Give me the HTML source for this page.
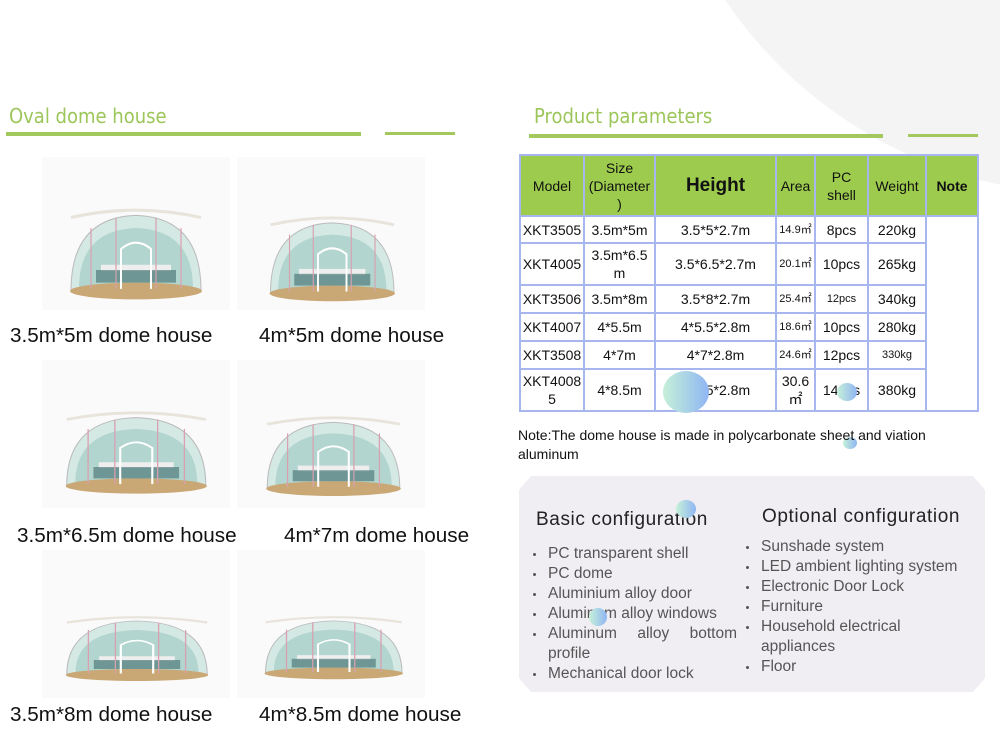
<!DOCTYPE html>
<html><head><meta charset="utf-8"><style>
body{margin:0;width:1000px;height:750px;overflow:hidden;background:#fff;font-family:"Liberation Sans",sans-serif;position:relative}
.a{position:absolute}
.h{color:#9cc65a;font-size:20px;font-family:"DejaVu Sans Condensed","Liberation Sans Narrow","Liberation Sans",sans-serif;font-weight:300}
.bar{position:absolute;height:4px;background:#a3c85e}
.cap{position:absolute;font-size:20.7px;color:#111;white-space:nowrap}
.img{position:absolute;background:#fafafa}
table{position:absolute;left:519px;top:154px;border-collapse:collapse;font-size:14px;color:#111}
td{border:2px solid #a8b6ef;text-align:center;padding:0;line-height:18px}
tr.hd td{background:#9dcb4d}
.cfg{position:absolute;left:519px;top:476px;width:466px;height:216px;background:#f0eef3;clip-path:polygon(12px 0,454px 0,466px 14px,466px 202px,454px 216px,12px 216px,0 202px,0 14px)}
.cfg h3{position:absolute;margin:0;font-weight:normal;font-size:19px;color:#222;letter-spacing:.6px}
.cfg ul{position:absolute;margin:0;padding:0;list-style:none;font-size:15.5px;color:#555;line-height:20px}
.cfg li{position:relative;padding-left:29px}
.cfg li:before{content:"";position:absolute;left:14px;top:9px;width:3px;height:3px;border-radius:50%;background:#555}
.blob{position:absolute;border-radius:50%;background:linear-gradient(90deg,#c6f0d8,#8fb6f3)}
</style></head><body>
<div class="a" style="left:650px;top:-686px;width:880px;height:880px;border-radius:50%;background:#f4f4f4"></div>

<div class="a h" style="left:9px;top:104px">Oval dome house</div>
<div class="bar" style="left:6px;top:132px;width:355px"></div>
<div class="bar" style="left:385px;top:132px;width:70px;height:3px"></div>
<div class="a h" style="left:534px;top:104px">Product parameters</div>
<div class="bar" style="left:529px;top:134px;width:354px"></div>
<div class="bar" style="left:908px;top:134px;width:70px;height:3px"></div>

<svg width="0" height="0" style="position:absolute"><defs>
<g id="d">
<path d="M10 80 Q10 10 75 8 Q140 10 140 80 Z" fill="#d4e8e4" stroke="#bbb" stroke-width="1"/>
<path d="M18 78 Q18 22 75 20 Q132 22 132 78 Z" fill="#a9cfc9" opacity=".8"/>
<ellipse cx="75" cy="80" rx="66" ry="8" fill="#c9a876"/>
<rect x="40" y="55" width="70" height="6" fill="#eee"/>
<rect x="35" y="60" width="80" height="12" fill="#3f6c6c" opacity=".6"/>
<path d="M60 78 L60 40 Q75 28 90 40 L90 78" fill="none" stroke="#fff" stroke-width="2"/>
<path d="M30 20 L30 78 M120 20 L120 78 M55 10 L55 78 M95 10 L95 78" stroke="#d9a0b0" stroke-width="1.2"/>
<path d="M10 10 Q75 -4 140 10" fill="none" stroke="#e8e4dc" stroke-width="3"/>
</g></defs></svg>

<div class="img" style="left:42px;top:157px;width:188px;height:153px"><svg width="188" height="153"><use href="#d" transform="translate(19,50) scale(1,1.05)"/></svg></div>
<div class="img" style="left:237px;top:157px;width:188px;height:153px"><svg width="188" height="153"><use href="#d" transform="translate(24,58) scale(0.95,0.98)"/></svg></div>
<div class="img" style="left:42px;top:360px;width:188px;height:148px"><svg width="188" height="148"><use href="#d" transform="translate(14,50) scale(1.07,0.95)"/></svg></div>
<div class="img" style="left:237px;top:360px;width:188px;height:148px"><svg width="188" height="148"><use href="#d" transform="translate(20,55) scale(1.02,0.92)"/></svg></div>
<div class="img" style="left:42px;top:550px;width:188px;height:148px"><svg width="188" height="148"><use href="#d" transform="translate(14,65) scale(1.08,0.75)"/></svg></div>
<div class="img" style="left:237px;top:550px;width:188px;height:148px"><svg width="188" height="148"><use href="#d" transform="translate(18,65) scale(1.05,0.73)"/></svg></div>

<div class="cap" style="left:10px;top:324px">3.5m*5m dome house</div>
<div class="cap" style="left:259px;top:324px">4m*5m dome house</div>
<div class="cap" style="left:17px;top:524px">3.5m*6.5m dome house</div>
<div class="cap" style="left:284px;top:524px">4m*7m dome house</div>
<div class="cap" style="left:10px;top:703px">3.5m*8m dome house</div>
<div class="cap" style="left:259px;top:703px">4m*8.5m dome house</div>

<table>
<tr class="hd" style="height:61px"><td style="width:62px">Model</td><td style="width:69px">Size<br>(Diameter<br>)</td><td style="width:119px;font-size:19px;font-weight:bold">Height</td><td style="width:37px">Area</td><td style="width:51px">PC<br>shell</td><td style="width:56px">Weight</td><td style="width:50px;font-weight:bold">Note</td></tr>
<tr style="height:27px"><td>XKT3505</td><td>3.5m*5m</td><td>3.5*5*2.7m</td><td style="font-size:11px">14.9㎡</td><td>8pcs</td><td>220kg</td><td rowspan="6" style="background:#fff"></td></tr>
<tr style="height:42px"><td>XKT4005</td><td>3.5m*6.5<br>m</td><td>3.5*6.5*2.7m</td><td style="font-size:11px">20.1㎡</td><td>10pcs</td><td>265kg</td></tr>
<tr style="height:28px"><td>XKT3506</td><td>3.5m*8m</td><td>3.5*8*2.7m</td><td style="font-size:11px">25.4㎡</td><td style="font-size:11px">12pcs</td><td>340kg</td></tr>
<tr style="height:28px"><td>XKT4007</td><td>4*5.5m</td><td>4*5.5*2.8m</td><td style="font-size:11px">18.6㎡</td><td>10pcs</td><td>280kg</td></tr>
<tr style="height:28px"><td>XKT3508</td><td>4*7m</td><td>4*7*2.8m</td><td style="font-size:11px">24.6㎡</td><td>12pcs</td><td style="font-size:11px">330kg</td></tr>
<tr style="height:42px"><td>XKT4008<br>5</td><td>4*8.5m</td><td>4*8.5*2.8m</td><td>30.6<br>㎡</td><td>14pcs</td><td>380kg</td></tr>
</table>
<div class="blob" style="left:663px;top:371px;width:46px;height:42px"></div>
<div class="blob" style="left:837px;top:383px;width:20px;height:18px"></div>
<div class="blob" style="left:843px;top:437px;width:14px;height:12px"></div>

<div class="a" style="left:518px;top:426px;font-size:14px;color:#111;line-height:19px;width:440px">Note:The dome house is made in polycarbonate sheet and viation aluminum</div>

<div class="cfg">
<h3 style="left:17px;top:33px">Basic configuration</h3>
<h3 style="left:243px;top:30px">Optional configuration</h3>
<ul style="left:0;top:68px;width:218px">
<li>PC transparent shell</li><li>PC dome</li><li>Aluminium alloy door</li><li>Aluminum alloy windows</li><li style="text-align:justify;text-align-last:left">Aluminum&nbsp;&nbsp;&nbsp; alloy&nbsp;&nbsp;&nbsp; bottom profile</li><li>Mechanical door lock</li></ul>
<ul style="left:213px;top:61px;width:240px">
<li>Sunshade system</li><li>LED ambient lighting system</li><li>Electronic Door Lock</li><li>Furniture</li><li>Household electrical<br>appliances</li><li>Floor</li></ul>
<div class="blob" style="left:157px;top:24px;width:20px;height:18px"></div>
<div class="blob" style="left:70px;top:132px;width:18px;height:18px"></div>
</div>
</body></html>
